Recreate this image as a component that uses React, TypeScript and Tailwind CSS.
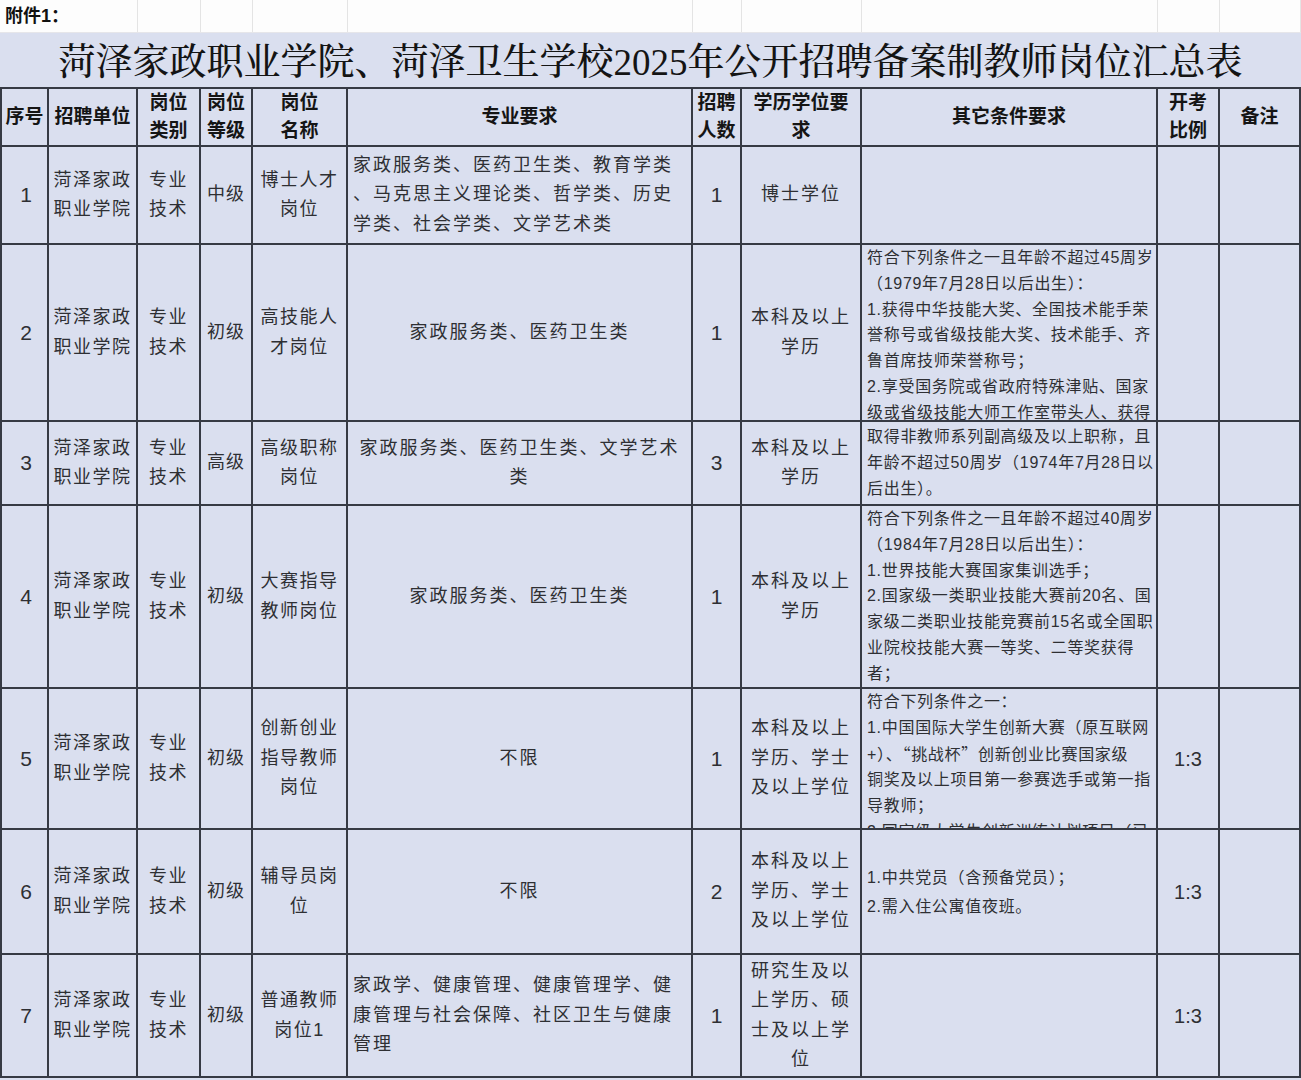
import React from "react";

const COLS = [49, 89, 63, 52, 95, 345, 49, 120, 296, 62, 81];
const GRID = "grid grid-cols-[49px_89px_63px_52px_95px_345px_49px_120px_296px_62px_81px]";

const SANS = { fontFamily: '"Liberation Sans", "Noto Sans CJK SC", sans-serif' };
const CJK = { fontFamily: '"Noto Sans CJK SC", sans-serif' };
const TITLE = { fontFamily: '"Liberation Serif", "Noto Serif CJK SC", "Noto Sans CJK SC", serif' };

type Row = {
  h: string;
  no: string;
  name: string[];
  grade: string;
  post: string[];
  major: string[];
  majorAlign?: "left" | "center";
  count: string;
  degree: string[];
  other: React.ReactNode[];
  otherTop?: boolean;
  otherLeading?: string;
  ratio: string;
};

const rows: Row[] = [
  {
    h: "h-[98px]",
    no: "1",
    name: ["菏泽家政", "职业学院"],
    grade: "中级",
    post: ["博士人才", "岗位"],
    major: ["家政服务类、医药卫生类、教育学类", "、马克思主义理论类、哲学类、历史", "学类、社会学类、文学艺术类"],
    majorAlign: "left",
    count: "1",
    degree: ["博士学位"],
    other: [],
    ratio: "",
  },
  {
    h: "h-[177px]",
    no: "2",
    name: ["菏泽家政", "职业学院"],
    grade: "初级",
    post: ["高技能人", "才岗位"],
    major: ["家政服务类、医药卫生类"],
    count: "1",
    degree: ["本科及以上", "学历"],
    other: [
      "符合下列条件之一且年龄不超过45周岁",
      "（1979年7月28日以后出生）：",
      "1.获得中华技能大奖、全国技术能手荣",
      "誉称号或省级技能大奖、技术能手、齐",
      "鲁首席技师荣誉称号；",
      "2.享受国务院或省政府特殊津贴、国家",
      "级或省级技能大师工作室带头人、获得",
    ],
    otherTop: true,
    ratio: "",
  },
  {
    h: "h-[84px]",
    no: "3",
    name: ["菏泽家政", "职业学院"],
    grade: "高级",
    post: ["高级职称", "岗位"],
    major: ["家政服务类、医药卫生类、文学艺术", "类"],
    count: "3",
    degree: ["本科及以上", "学历"],
    other: ["取得非教师系列副高级及以上职称，且", "年龄不超过50周岁（1974年7月28日以", "后出生）。"],
    ratio: "",
  },
  {
    h: "h-[183px]",
    no: "4",
    name: ["菏泽家政", "职业学院"],
    grade: "初级",
    post: ["大赛指导", "教师岗位"],
    major: ["家政服务类、医药卫生类"],
    count: "1",
    degree: ["本科及以上", "学历"],
    other: [
      "符合下列条件之一且年龄不超过40周岁",
      "（1984年7月28日以后出生）：",
      "1.世界技能大赛国家集训选手；",
      "2.国家级一类职业技能大赛前20名、国",
      "家级二类职业技能竞赛前15名或全国职",
      "业院校技能大赛一等奖、二等奖获得",
      "者；",
    ],
    otherTop: true,
    ratio: "",
  },
  {
    h: "h-[141px]",
    no: "5",
    name: ["菏泽家政", "职业学院"],
    grade: "初级",
    post: ["创新创业", "指导教师", "岗位"],
    major: ["不限"],
    count: "1",
    degree: ["本科及以上", "学历、学士", "及以上学位"],
    other: [
      "符合下列条件之一：",
      "1.中国国际大学生创新大赛（原互联网",
      <span key="q">
        +）、<span style={CJK}>“</span>挑战杯<span style={CJK}>”</span>创新创业比赛国家级
      </span>,
      "铜奖及以上项目第一参赛选手或第一指",
      "导教师；",
      "2.国家级大学生创新训练计划项目（已",
    ],
    otherTop: true,
    ratio: "1:3",
  },
  {
    h: "h-[125px]",
    no: "6",
    name: ["菏泽家政", "职业学院"],
    grade: "初级",
    post: ["辅导员岗", "位"],
    major: ["不限"],
    count: "2",
    degree: ["本科及以上", "学历、学士", "及以上学位"],
    other: ["1.中共党员（含预备党员）；", "2.需入住公寓值夜班。"],
    otherLeading: "leading-[29px]",
    ratio: "1:3",
  },
  {
    h: "h-[123px]",
    no: "7",
    name: ["菏泽家政", "职业学院"],
    grade: "初级",
    post: ["普通教师", "岗位1"],
    major: ["家政学、健康管理、健康管理学、健", "康管理与社会保障、社区卫生与健康", "管理"],
    majorAlign: "left",
    count: "1",
    degree: ["研究生及以", "上学历、硕", "士及以上学", "位"],
    other: [],
    ratio: "1:3",
  },
];

const cell = "border-r-2 border-b-2 border-[#363a44] overflow-hidden flex";

function Lines({ lines, className = "" }: { lines: React.ReactNode[]; className?: string }) {
  return (
    <div className={className}>
      {lines.map((l, i) => (
        <div key={i} className="whitespace-nowrap">
          {l}
        </div>
      ))}
    </div>
  );
}

function Center({ lines, extra = "" }: { lines: string[]; extra?: string }) {
  return (
    <div className={`${cell} items-center justify-center text-center`}>
      <Lines lines={lines} className={`text-[18px] leading-[29.5px] tracking-[1.5px] ${extra}`} />
    </div>
  );
}

export default function App() {
  const headers: string[][] = [
    ["序号"],
    ["招聘单位"],
    ["岗位", "类别"],
    ["岗位", "等级"],
    ["岗位", "名称"],
    ["专业要求"],
    ["招聘", "人数"],
    ["学历学位要", "求"],
    ["其它条件要求"],
    ["开考", "比例"],
    ["备注"],
  ];

  return (
    <div className="w-[1301px] h-[1080px] overflow-hidden bg-[#dadfef] text-[#2e2f33]" style={SANS}>
      {/* 附件 row */}
      <div className="flex h-[33px] bg-[#fdfdfd] border-b border-[#e6e6ea]">
        <div className="w-[138px] border-r border-[#e4e4e4] flex items-center pl-[5px] text-[18px] font-bold text-[#111]">
          附件1：
        </div>
        {COLS.slice(2).map((w, i) => (
          <div key={i} style={{ width: w }} className="border-r border-[#e4e4e4]" />
        ))}
      </div>

      {/* title */}
      <div className="h-[54px] flex items-center justify-center text-[37px] leading-none font-medium text-[#141414] pt-[4px]" style={TITLE}>
        菏泽家政职业学院、菏泽卫生学校2025年公开招聘备案制教师岗位汇总表
      </div>

      {/* header */}
      <div className={`${GRID} h-[60px]`}>
        {headers.map((h, i) => (
          <div
            key={i}
            className={`${cell} border-t-2 ${i === 0 ? "border-l-2" : ""} items-center justify-center text-center`}
          >
            <Lines lines={h} className="text-[19px] leading-[28px] font-bold text-[#151515]" />
          </div>
        ))}
      </div>

      {rows.map((r) => (
        <div key={r.no} className={`${GRID} ${r.h}`}>
          <div className={`${cell} border-l-2 items-center justify-center pl-[3px] text-[21px] font-light`}>{r.no}</div>
          <Center lines={r.name} />
          <Center lines={["专业", "技术"]} />
          <Center lines={[r.grade]} extra="tracking-[1px]" />
          <Center lines={r.post} />
          <div className={`${cell} items-center ${r.majorAlign === "left" ? "justify-start pl-[5px]" : "justify-center text-center"}`}>
            <Lines lines={r.major} className="text-[18px] leading-[29.5px] tracking-[2px]" />
          </div>
          <div className={`${cell} items-center justify-center text-[21px] font-light`}>{r.count}</div>
          <Center lines={r.degree} extra="tracking-[2px]" />
          <div className={`${cell} ${r.otherTop ? "items-start" : "items-center"} justify-start pl-[5px]`}>
            <Lines
              lines={r.other}
              className={`text-[16px] ${r.otherLeading ?? "leading-[25.8px]"} tracking-[0.7px]`}
            />
          </div>
          <div className={`${cell} items-center justify-center text-[20px] font-light`}>{r.ratio}</div>
          <div className={cell} />
        </div>
      ))}
    </div>
  );
}
